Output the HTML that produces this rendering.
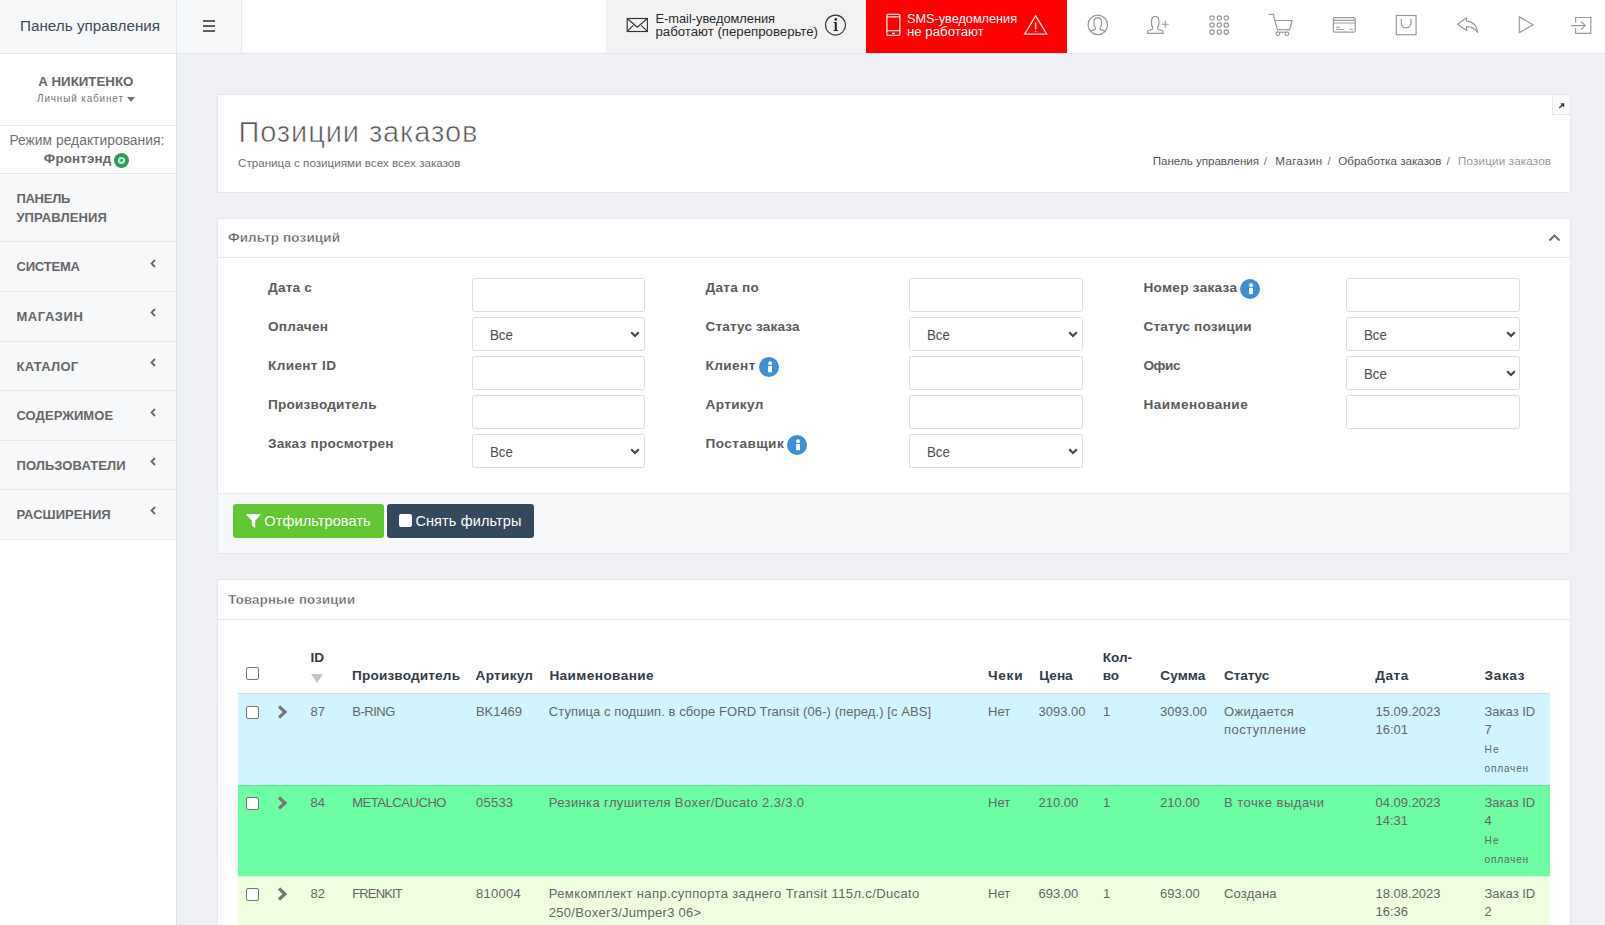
<!DOCTYPE html>
<html><head><meta charset="utf-8">
<style>
*{box-sizing:border-box;margin:0;padding:0}
html,body{width:1605px;height:925px;overflow:hidden;background:#f0f1f5;font-family:"Liberation Sans",sans-serif;color:#555}
.a{position:absolute}
.t{position:absolute;white-space:nowrap;line-height:1}
</style></head><body>
<div class="a" style="left:0.00px;top:0.00px;width:1605.00px;height:53.00px;background:#fff;"></div>
<div class="a" style="left:0.00px;top:53.00px;width:1605.00px;height:1.00px;background:#e1e4e9;"></div>
<div class="a" style="left:0.00px;top:0.00px;width:176.00px;height:53.00px;background:#f7f8fa;"></div>
<div class="a" style="left:176.00px;top:0.00px;width:1.00px;height:54.00px;background:#e1e4e8;"></div>
<div class="a" style="left:177.00px;top:0.00px;width:64.00px;height:53.00px;background:#f7f8fa;"></div>
<div class="a" style="left:241.00px;top:0.00px;width:1.00px;height:53.00px;background:#e6e8ec;"></div>
<span class="t" style="left:20.00px;top:18.19px;font-size:15.25px;color:#3e4a56;">Панель управления</span>
<div class="a" style="left:202.80px;top:20.00px;width:12.60px;height:2.00px;background:#606060;"></div>
<div class="a" style="left:202.80px;top:25.00px;width:12.60px;height:2.00px;background:#606060;"></div>
<div class="a" style="left:202.80px;top:30.00px;width:12.60px;height:2.00px;background:#606060;"></div>
<div class="a" style="left:606.00px;top:0.00px;width:260.00px;height:53.00px;background:#f2f2f2;"></div>
<div class="a" style="left:866.00px;top:0.00px;width:201.00px;height:53.00px;background:#ff0000;"></div>
<span class="t" style="left:655.50px;top:13.46px;font-size:12.80px;color:#2a2a2a;">E-mail-уведомления</span>
<span class="t" style="left:655.50px;top:25.10px;font-size:13.23px;color:#2a2a2a;">работают (перепроверьте)</span>
<span class="t" style="left:907.00px;top:13.35px;font-size:12.70px;color:#fff;">SMS-уведомления</span>
<span class="t" style="left:907.00px;top:24.98px;font-size:13.25px;color:#fff;">не работают</span>
<svg class="a" style="left:0;top:0" width="1605" height="53" viewBox="0 0 1605 53">
 <g fill="none" stroke="#333" stroke-width="1.15">
  <rect x="627.2" y="18.5" width="20.2" height="13" />
  <path d="M627.5 18.8 L637.3 27.2 L647 18.8 M627.5 31.2 L633.3 25.3 M647 31.2 L641.3 25.3"/>
  <circle cx="835.5" cy="25.1" r="10"/>
 </g>
 <g fill="#222"><circle cx="835.8" cy="19.4" r="1.3"/><path d="M833.6 22 H836.8 V30 H838 V31 H833.5 V30 H834.8 V23 H833.6Z"/></g>
 <g fill="none" stroke="#ffe0e0" stroke-width="1.3">
  <rect x="886.9" y="14.4" width="13" height="21" rx="1"/>
  <path d="M887 16.9 H900 M887 30.6 H900 M892 33.4 H895"/>
  <path d="M1035.6 15.8 L1024.6 34.2 H1046.8Z" stroke-linejoin="miter"/>
  <path d="M1035.6 22.5 V29.5" stroke-width="1.4"/>
 </g>
 <circle cx="1035.6" cy="31.5" r="0.8" fill="#ffe0e0"/>
 <g fill="none" stroke="#9a9a9a" stroke-width="1.2">
  <circle cx="1097.8" cy="24.9" r="9.7"/>
  <path d="M1090.2 31.6 C1091 30 1094.3 30.2 1095.3 29.3 V27.6 C1094.2 26.5 1094 24.7 1094 22.5 C1094 19.5 1095.5 17.7 1097.8 17.7 C1100.1 17.7 1101.6 19.5 1101.6 22.5 C1101.6 24.7 1101.4 26.5 1100.3 27.6 V29.3 C1101.3 30.2 1104.6 30 1105.4 31.6"/>
  <path d="M1147.5 33.4 V31.5 C1147.5 30 1152 30 1152.8 29 V27.6 C1151.6 26.4 1151.4 24.6 1151.4 22.2 C1151.4 18.5 1153 16.4 1155.2 16.4 C1157.4 16.4 1159 18.5 1159 22.2 C1159 24.6 1158.8 26.4 1157.6 27.6 V29 C1158.4 30 1163 30 1163 31.5 V33.4 Z"/>
  <path d="M1161.8 24.3 H1168.8 M1165.3 20.8 V27.8" stroke-width="1.1"/>
  <circle cx="1212.1" cy="18" r="2.2"/><circle cx="1219.3" cy="18" r="2.2"/><circle cx="1226.3" cy="18" r="2.2"/>
  <circle cx="1212.1" cy="25" r="2.2"/><circle cx="1219.3" cy="25" r="2.2"/><circle cx="1226.3" cy="25" r="2.2"/>
  <circle cx="1212.1" cy="32.1" r="2.2"/><circle cx="1219.3" cy="32.1" r="2.2"/><circle cx="1226.3" cy="32.1" r="2.2"/>
  <path d="M1268.8 14.3 H1273.3 L1277.4 29.6 H1289.7 L1292.2 20.5 H1275"/>
  <path d="M1279.6 32.2 H1285"/>
  <circle cx="1277.8" cy="33.7" r="1.8"/><circle cx="1286.9" cy="33.7" r="1.8"/>
  <rect x="1333.4" y="17.6" width="21.8" height="14.6" rx="1.5"/>
  <path d="M1333.5 20.3 H1355 M1333.5 23 H1355" />
  <path d="M1336.2 27.3 H1340 M1336.2 29.5 H1343.8 M1349.5 29.3 H1352.8" stroke-width="1"/>
  <rect x="1396.3" y="15.5" width="19.8" height="19.2"/>
  <path d="M1400.5 19.6 H1401.3 V23 C1401.3 26.5 1403.3 27.8 1406.1 27.8 C1408.9 27.8 1410.9 26.5 1410.9 23 V19.6 H1411.7"/>
  <path d="M1457.6 24.3 L1466.5 17.8 V21.1 C1472.5 21.6 1477 25.5 1477.7 32.4 C1475.3 28.6 1472 26.6 1466.5 26.6 V30.6 Z" stroke-linejoin="round"/>
  <path d="M1519.3 16.9 V32.7 L1533 24.8 Z"/>
  <path d="M1575.6 22.5 V17.5 H1590.8 V33.3 H1575.6 V28.3"/>
  <path d="M1570.9 25.6 H1585.2 M1581 21.4 L1585.2 25.6 L1581 29.8"/>
 </g>
</svg>
<div class="a" style="left:0.00px;top:54.00px;width:176.00px;height:871.00px;background:#fff;"></div>
<div class="a" style="left:176.00px;top:54.00px;width:1.00px;height:871.00px;background:#e1e4e8;"></div>
<span class="t" style="left:38.20px;top:74.74px;font-size:13.30px;color:#666;font-weight:bold;letter-spacing:0.001px;">А НИКИТЕНКО</span>
<span class="t" style="left:37.00px;top:93.53px;font-size:10.00px;color:#777;letter-spacing:0.828px;">Личный кабинет</span>
<svg class="a" style="left:127px;top:97px" width="8" height="5" viewBox="0 0 8 5"><path d="M0 0 H8 L4 5Z" fill="#777"/></svg>
<div class="a" style="left:0.00px;top:125.00px;width:176.00px;height:1.00px;background:#e5e7eb;"></div>
<span class="t" style="left:9.40px;top:133.52px;font-size:13.80px;color:#707070;letter-spacing:0.036px;">Режим редактирования:</span>
<span class="t" style="left:43.80px;top:151.86px;font-size:13.40px;color:#666;font-weight:bold;letter-spacing:0.154px;">Фронтэнд</span>
<svg class="a" style="left:114px;top:153px" width="15" height="15" viewBox="0 0 15 15"><circle cx="7.5" cy="7.5" r="7.5" fill="#2a9c5a"/><circle cx="7.5" cy="7.5" r="3.6" fill="#b4f3cc"/><circle cx="7.6" cy="7.4" r="1.4" fill="#5a8a5a"/></svg>
<div class="a" style="left:0.00px;top:173.00px;width:176.00px;height:1.00px;background:#e5e7eb;"></div>
<div class="a" style="left:0.00px;top:174.00px;width:176.00px;height:67.00px;background:#f7f8fa;"></div>
<div class="a" style="left:0.00px;top:241.00px;width:176.00px;height:1.00px;background:#e5e7eb;"></div>
<span class="t" style="left:16.40px;top:191.70px;font-size:13.00px;color:#666;font-weight:bold;letter-spacing:-0.253px;">ПАНЕЛЬ</span>
<span class="t" style="left:16.40px;top:210.80px;font-size:13.00px;color:#666;font-weight:bold;letter-spacing:0.124px;">УПРАВЛЕНИЯ</span>
<div class="a" style="left:0.00px;top:242.00px;width:176.00px;height:49.00px;background:#f7f8fa;"></div>
<div class="a" style="left:0.00px;top:291.00px;width:176.00px;height:1.00px;background:#e5e7eb;"></div>
<span class="t" style="left:16.50px;top:260.20px;font-size:13.00px;color:#666;font-weight:bold;letter-spacing:-0.190px;">СИСТЕМА</span>
<svg class="a" style="left:149.5px;top:258.6px" width="6" height="9" viewBox="0 0 6 9"><path d="M5 1 L1.5 4.5 L5 8" fill="none" stroke="#666" stroke-width="1.8"/></svg>
<div class="a" style="left:0.00px;top:292.00px;width:176.00px;height:49.00px;background:#f7f8fa;"></div>
<div class="a" style="left:0.00px;top:341.00px;width:176.00px;height:1.00px;background:#e5e7eb;"></div>
<span class="t" style="left:16.50px;top:309.90px;font-size:13.00px;color:#666;font-weight:bold;letter-spacing:0.542px;">МАГАЗИН</span>
<svg class="a" style="left:149.5px;top:308.3px" width="6" height="9" viewBox="0 0 6 9"><path d="M5 1 L1.5 4.5 L5 8" fill="none" stroke="#666" stroke-width="1.8"/></svg>
<div class="a" style="left:0.00px;top:342.00px;width:176.00px;height:48.00px;background:#f7f8fa;"></div>
<div class="a" style="left:0.00px;top:390.00px;width:176.00px;height:1.00px;background:#e5e7eb;"></div>
<span class="t" style="left:16.50px;top:359.60px;font-size:13.00px;color:#666;font-weight:bold;letter-spacing:0.291px;">КАТАЛОГ</span>
<svg class="a" style="left:149.5px;top:358.0px" width="6" height="9" viewBox="0 0 6 9"><path d="M5 1 L1.5 4.5 L5 8" fill="none" stroke="#666" stroke-width="1.8"/></svg>
<div class="a" style="left:0.00px;top:391.00px;width:176.00px;height:49.00px;background:#f7f8fa;"></div>
<div class="a" style="left:0.00px;top:440.00px;width:176.00px;height:1.00px;background:#e5e7eb;"></div>
<span class="t" style="left:16.50px;top:409.20px;font-size:13.00px;color:#666;font-weight:bold;letter-spacing:0.049px;">СОДЕРЖИМОЕ</span>
<svg class="a" style="left:149.5px;top:407.6px" width="6" height="9" viewBox="0 0 6 9"><path d="M5 1 L1.5 4.5 L5 8" fill="none" stroke="#666" stroke-width="1.8"/></svg>
<div class="a" style="left:0.00px;top:441.00px;width:176.00px;height:48.00px;background:#f7f8fa;"></div>
<div class="a" style="left:0.00px;top:489.00px;width:176.00px;height:1.00px;background:#e5e7eb;"></div>
<span class="t" style="left:16.50px;top:458.50px;font-size:13.00px;color:#666;font-weight:bold;letter-spacing:0.116px;">ПОЛЬЗОВАТЕЛИ</span>
<svg class="a" style="left:149.5px;top:456.9px" width="6" height="9" viewBox="0 0 6 9"><path d="M5 1 L1.5 4.5 L5 8" fill="none" stroke="#666" stroke-width="1.8"/></svg>
<div class="a" style="left:0.00px;top:490.00px;width:176.00px;height:49.00px;background:#f7f8fa;"></div>
<div class="a" style="left:0.00px;top:539.00px;width:176.00px;height:1.00px;background:#e5e7eb;"></div>
<span class="t" style="left:16.50px;top:507.90px;font-size:13.00px;color:#666;font-weight:bold;letter-spacing:0.043px;">РАСШИРЕНИЯ</span>
<svg class="a" style="left:149.5px;top:506.3px" width="6" height="9" viewBox="0 0 6 9"><path d="M5 1 L1.5 4.5 L5 8" fill="none" stroke="#666" stroke-width="1.8"/></svg>
<div class="a" style="left:217.00px;top:94.00px;width:1354.00px;height:99.00px;background:#e3e6ea;"></div>
<div class="a" style="left:218.00px;top:95.00px;width:1352.00px;height:97.00px;background:#fff;"></div>
<div class="a" style="left:1552.00px;top:95.00px;width:18.00px;height:19.00px;background:#f9fafb;"></div>
<div class="a" style="left:1552.00px;top:95.00px;width:1.00px;height:20.00px;background:#e3e6ea;"></div>
<div class="a" style="left:1552.00px;top:114.00px;width:18.00px;height:1.00px;background:#e3e6ea;"></div>
<svg class="a" style="left:1556px;top:100.5px" width="10" height="10" viewBox="0 0 10 10"><path d="M3.3 7.1 L7.4 3 M4.7 2.8 H7.6 V5.7" fill="none" stroke="#3a3a3a" stroke-width="1.35"/></svg>
<span class="t" style="left:238.40px;top:118.25px;font-size:29.00px;color:#555;letter-spacing:0.910px;-webkit-text-stroke:0.6px #fff;">Позиции заказов</span>
<span class="t" style="left:238.00px;top:157.38px;font-size:11.60px;color:#707070;letter-spacing:0.027px;">Страница с позициями всех всех заказов</span>
<span class="t" style="left:1152.70px;top:155.18px;font-size:11.60px;color:#555;letter-spacing:-0.007px;">Панель управления</span>
<span class="t" style="left:1263.80px;top:155.18px;font-size:11.60px;color:#777;">/</span>
<span class="t" style="left:1275.30px;top:155.18px;font-size:11.60px;color:#555;letter-spacing:0.361px;">Магазин</span>
<span class="t" style="left:1327.60px;top:155.18px;font-size:11.60px;color:#777;">/</span>
<span class="t" style="left:1338.20px;top:155.18px;font-size:11.60px;color:#555;letter-spacing:0.025px;">Обработка заказов</span>
<span class="t" style="left:1446.60px;top:155.18px;font-size:11.60px;color:#777;">/</span>
<span class="t" style="left:1458.00px;top:155.18px;font-size:11.60px;color:#999;letter-spacing:0.181px;">Позиции заказов</span>
<div class="a" style="left:217.00px;top:218.00px;width:1354.00px;height:336.00px;background:#e3e6ea;"></div>
<div class="a" style="left:218.00px;top:219.00px;width:1352.00px;height:334.00px;background:#fff;"></div>
<div class="a" style="left:218.00px;top:257.00px;width:1352.00px;height:1.00px;background:#e6e8ec;"></div>
<span class="t" style="left:228.00px;top:231.47px;font-size:13.50px;color:#5a5a5a;font-weight:bold;letter-spacing:0.135px;-webkit-text-stroke:0.35px #fff;">Фильтр позиций</span>
<svg class="a" style="left:1548px;top:233px" width="13" height="9" viewBox="0 0 13 9"><path d="M1.5 7.5 L6.5 2.5 L11.5 7.5" fill="none" stroke="#666" stroke-width="1.8"/></svg>
<div class="a" style="left:218.00px;top:493.00px;width:1352.00px;height:1.00px;background:#e6e8ec;"></div>
<div class="a" style="left:218.00px;top:494.00px;width:1352.00px;height:59.00px;background:#f7f8fa;"></div>
<span class="t" style="left:268.00px;top:281.09px;font-size:13.60px;color:#5c5c5c;font-weight:bold;letter-spacing:0.197px;">Дата с</span>
<div class="a" style="left:472px;top:278px;width:173px;height:34px;background:#fff;border:1px solid #dcdcdc;border-radius:2.5px"></div>
<span class="t" style="left:268.00px;top:320.09px;font-size:13.60px;color:#5c5c5c;font-weight:bold;letter-spacing:0.281px;">Оплачен</span>
<div class="a" style="left:472px;top:317px;width:173px;height:34px;background:#fff;border:1px solid #dcdcdc;border-radius:2.5px"></div>
<span class="t" style="left:489.80px;top:327.73px;font-size:14.50px;color:#505050;transform:scaleX(0.915);transform-origin:0 0;">Все</span>
<svg class="a" style="left:630.0px;top:331px" width="10" height="7" viewBox="0 0 10 7"><path d="M1.2 1.2 L5 5 L8.8 1.2" fill="none" stroke="#444" stroke-width="2"/></svg>
<span class="t" style="left:268.00px;top:359.09px;font-size:13.60px;color:#5c5c5c;font-weight:bold;letter-spacing:0.363px;">Клиент ID</span>
<div class="a" style="left:472px;top:356px;width:173px;height:34px;background:#fff;border:1px solid #dcdcdc;border-radius:2.5px"></div>
<span class="t" style="left:268.00px;top:398.09px;font-size:13.60px;color:#5c5c5c;font-weight:bold;letter-spacing:0.208px;">Производитель</span>
<div class="a" style="left:472px;top:395px;width:173px;height:34px;background:#fff;border:1px solid #dcdcdc;border-radius:2.5px"></div>
<span class="t" style="left:268.00px;top:437.09px;font-size:13.60px;color:#5c5c5c;font-weight:bold;letter-spacing:0.239px;">Заказ просмотрен</span>
<div class="a" style="left:472px;top:434px;width:173px;height:34px;background:#fff;border:1px solid #dcdcdc;border-radius:2.5px"></div>
<span class="t" style="left:489.80px;top:444.73px;font-size:14.50px;color:#505050;transform:scaleX(0.915);transform-origin:0 0;">Все</span>
<svg class="a" style="left:630.0px;top:448px" width="10" height="7" viewBox="0 0 10 7"><path d="M1.2 1.2 L5 5 L8.8 1.2" fill="none" stroke="#444" stroke-width="2"/></svg>
<span class="t" style="left:705.50px;top:281.09px;font-size:13.60px;color:#5c5c5c;font-weight:bold;letter-spacing:0.272px;">Дата по</span>
<div class="a" style="left:909px;top:278px;width:174px;height:34px;background:#fff;border:1px solid #dcdcdc;border-radius:2.5px"></div>
<span class="t" style="left:705.50px;top:320.09px;font-size:13.60px;color:#5c5c5c;font-weight:bold;letter-spacing:0.141px;">Статус заказа</span>
<div class="a" style="left:909px;top:317px;width:174px;height:34px;background:#fff;border:1px solid #dcdcdc;border-radius:2.5px"></div>
<span class="t" style="left:926.80px;top:327.73px;font-size:14.50px;color:#505050;transform:scaleX(0.915);transform-origin:0 0;">Все</span>
<svg class="a" style="left:1068.3px;top:331px" width="10" height="7" viewBox="0 0 10 7"><path d="M1.2 1.2 L5 5 L8.8 1.2" fill="none" stroke="#444" stroke-width="2"/></svg>
<span class="t" style="left:705.50px;top:359.09px;font-size:13.60px;color:#5c5c5c;font-weight:bold;letter-spacing:0.416px;">Клиент</span>
<div class="a" style="left:909px;top:356px;width:174px;height:34px;background:#fff;border:1px solid #dcdcdc;border-radius:2.5px"></div>
<svg class="a" style="left:758.8px;top:356.8px" width="20" height="20" viewBox="0 0 20 20"><circle cx="10" cy="10" r="10" fill="#3d8fd8"/><circle cx="11.1" cy="6.2" r="1.9" fill="#fff"/><path d="M9.1 8.9 H13 V15.2 H9.1Z" fill="#fff"/></svg>
<span class="t" style="left:705.50px;top:398.09px;font-size:13.60px;color:#5c5c5c;font-weight:bold;letter-spacing:0.353px;">Артикул</span>
<div class="a" style="left:909px;top:395px;width:174px;height:34px;background:#fff;border:1px solid #dcdcdc;border-radius:2.5px"></div>
<span class="t" style="left:705.50px;top:437.09px;font-size:13.60px;color:#5c5c5c;font-weight:bold;letter-spacing:0.441px;">Поставщик</span>
<div class="a" style="left:909px;top:434px;width:174px;height:34px;background:#fff;border:1px solid #dcdcdc;border-radius:2.5px"></div>
<span class="t" style="left:926.80px;top:444.73px;font-size:14.50px;color:#505050;transform:scaleX(0.915);transform-origin:0 0;">Все</span>
<svg class="a" style="left:1068.3px;top:448px" width="10" height="7" viewBox="0 0 10 7"><path d="M1.2 1.2 L5 5 L8.8 1.2" fill="none" stroke="#444" stroke-width="2"/></svg>
<svg class="a" style="left:786.6px;top:434.8px" width="20" height="20" viewBox="0 0 20 20"><circle cx="10" cy="10" r="10" fill="#3d8fd8"/><circle cx="11.1" cy="6.2" r="1.9" fill="#fff"/><path d="M9.1 8.9 H13 V15.2 H9.1Z" fill="#fff"/></svg>
<span class="t" style="left:1143.50px;top:281.09px;font-size:13.60px;color:#5c5c5c;font-weight:bold;letter-spacing:0.277px;">Номер заказа</span>
<div class="a" style="left:1346px;top:278px;width:174px;height:34px;background:#fff;border:1px solid #dcdcdc;border-radius:2.5px"></div>
<svg class="a" style="left:1240.0px;top:279.0px" width="20" height="20" viewBox="0 0 20 20"><circle cx="10" cy="10" r="10" fill="#3d8fd8"/><circle cx="11.1" cy="6.2" r="1.9" fill="#fff"/><path d="M9.1 8.9 H13 V15.2 H9.1Z" fill="#fff"/></svg>
<span class="t" style="left:1143.50px;top:320.09px;font-size:13.60px;color:#5c5c5c;font-weight:bold;letter-spacing:0.145px;">Статус позиции</span>
<div class="a" style="left:1346px;top:317px;width:174px;height:34px;background:#fff;border:1px solid #dcdcdc;border-radius:2.5px"></div>
<span class="t" style="left:1363.80px;top:327.73px;font-size:14.50px;color:#505050;transform:scaleX(0.915);transform-origin:0 0;">Все</span>
<svg class="a" style="left:1505.5px;top:331px" width="10" height="7" viewBox="0 0 10 7"><path d="M1.2 1.2 L5 5 L8.8 1.2" fill="none" stroke="#444" stroke-width="2"/></svg>
<span class="t" style="left:1143.50px;top:359.09px;font-size:13.60px;color:#5c5c5c;font-weight:bold;letter-spacing:-0.464px;">Офис</span>
<div class="a" style="left:1346px;top:356px;width:174px;height:34px;background:#fff;border:1px solid #dcdcdc;border-radius:2.5px"></div>
<span class="t" style="left:1363.80px;top:366.73px;font-size:14.50px;color:#505050;transform:scaleX(0.915);transform-origin:0 0;">Все</span>
<svg class="a" style="left:1505.5px;top:370px" width="10" height="7" viewBox="0 0 10 7"><path d="M1.2 1.2 L5 5 L8.8 1.2" fill="none" stroke="#444" stroke-width="2"/></svg>
<span class="t" style="left:1143.50px;top:398.09px;font-size:13.60px;color:#5c5c5c;font-weight:bold;letter-spacing:0.406px;">Наименование</span>
<div class="a" style="left:1346px;top:395px;width:174px;height:34px;background:#fff;border:1px solid #dcdcdc;border-radius:2.5px"></div>
<div class="a" style="left:233.00px;top:504.00px;width:151.00px;height:34.00px;background:#60c733;border-radius:3px"></div>
<svg class="a" style="left:245.8px;top:514px" width="15" height="15" viewBox="0 0 15 15"><path d="M0.3 0.8 Q0.3 0 1 0 H14 Q14.7 0 14.7 0.8 L9.2 6.8 V14 L5.8 11.8 V6.8Z" fill="#fff"/></svg>
<span class="t" style="left:264.30px;top:513.53px;font-size:14.50px;color:#fff;letter-spacing:0.101px;">Отфильтровать</span>
<div class="a" style="left:387.00px;top:504.00px;width:147.00px;height:34.00px;background:#34495e;border-radius:3px"></div>
<div class="a" style="left:399.20px;top:514.20px;width:12.80px;height:12.80px;background:#fff;border-radius:2px"></div>
<span class="t" style="left:415.40px;top:513.53px;font-size:14.50px;color:#fff;letter-spacing:0.116px;">Снять фильтры</span>
<div class="a" style="left:217.00px;top:579.00px;width:1354.00px;height:362.00px;background:#e3e6ea;"></div>
<div class="a" style="left:218.00px;top:580.00px;width:1352.00px;height:360.00px;background:#fff;"></div>
<div class="a" style="left:218.00px;top:619.00px;width:1352.00px;height:1.00px;background:#e6e8ec;"></div>
<span class="t" style="left:228.30px;top:592.93px;font-size:13.20px;color:#5a5a5a;font-weight:bold;letter-spacing:0.202px;-webkit-text-stroke:0.35px #fff;">Товарные позиции</span>
<div class="a" style="left:246.0px;top:667.0px;width:13px;height:13px;border:1px solid #767676;border-radius:2px;background:#fff"></div>
<span class="t" style="left:310.60px;top:650.89px;font-size:13.60px;color:#333c48;font-weight:bold;">ID</span>
<svg class="a" style="left:311px;top:674px" width="12" height="10" viewBox="0 0 12 10"><path d="M0 0 H12 L6 9Z" fill="#c4c4c4"/></svg>
<span class="t" style="left:352.00px;top:668.69px;font-size:13.60px;color:#333c48;font-weight:bold;letter-spacing:0.167px;">Производитель</span>
<span class="t" style="left:475.60px;top:668.69px;font-size:13.60px;color:#333c48;font-weight:bold;letter-spacing:0.270px;">Артикул</span>
<span class="t" style="left:549.40px;top:668.69px;font-size:13.60px;color:#333c48;font-weight:bold;letter-spacing:0.406px;">Наименование</span>
<span class="t" style="left:988.00px;top:668.69px;font-size:13.60px;color:#333c48;font-weight:bold;letter-spacing:0.740px;">Чеки</span>
<span class="t" style="left:1039.20px;top:668.69px;font-size:13.60px;color:#333c48;font-weight:bold;letter-spacing:0.021px;">Цена</span>
<span class="t" style="left:1160.20px;top:668.69px;font-size:13.60px;color:#333c48;font-weight:bold;letter-spacing:0.124px;">Сумма</span>
<span class="t" style="left:1224.00px;top:668.69px;font-size:13.60px;color:#333c48;font-weight:bold;letter-spacing:-0.106px;">Статус</span>
<span class="t" style="left:1375.20px;top:668.69px;font-size:13.60px;color:#333c48;font-weight:bold;letter-spacing:0.544px;">Дата</span>
<span class="t" style="left:1484.50px;top:668.69px;font-size:13.60px;color:#333c48;font-weight:bold;letter-spacing:0.656px;">Заказ</span>
<span class="t" style="left:1102.70px;top:650.99px;font-size:13.60px;color:#333c48;font-weight:bold;">Кол-</span>
<span class="t" style="left:1102.70px;top:668.69px;font-size:13.60px;color:#333c48;font-weight:bold;">во</span>
<div class="a" style="left:238.00px;top:693.00px;width:1312.00px;height:1.00px;background:#d5dde3;"></div>
<div class="a" style="left:238.00px;top:694.00px;width:1312.00px;height:91.00px;background:#d0f5fe;"></div>
<div class="a" style="left:246.0px;top:706.0px;width:13px;height:13px;border:1px solid #767676;border-radius:2px;background:#fff"></div>
<svg class="a" style="left:277px;top:705px" width="11" height="14" viewBox="0 0 11 14"><path d="M2 1.5 L8 7 L2 12.5" fill="none" stroke="#777" stroke-width="3.2"/></svg>
<span class="t" style="left:310.50px;top:705.10px;font-size:13.00px;color:#666;">87</span>
<span class="t" style="left:352.20px;top:705.10px;font-size:13.00px;color:#666;letter-spacing:-0.460px;">B-RING</span>
<span class="t" style="left:476.00px;top:705.10px;font-size:13.00px;color:#666;letter-spacing:-0.053px;">BK1469</span>
<span class="t" style="left:548.80px;top:705.10px;font-size:13.00px;color:#666;letter-spacing:0.084px;">Ступица с подшип. в сборе FORD Transit (06-) (перед.) [с ABS]</span>
<span class="t" style="left:988.00px;top:705.10px;font-size:13.00px;color:#666;">Нет</span>
<span class="t" style="left:1038.50px;top:705.10px;font-size:13.00px;color:#666;">3093.00</span>
<span class="t" style="left:1103.00px;top:705.10px;font-size:13.00px;color:#666;">1</span>
<span class="t" style="left:1160.00px;top:705.10px;font-size:13.00px;color:#666;">3093.00</span>
<span class="t" style="left:1224.00px;top:705.10px;font-size:13.00px;color:#666;letter-spacing:0.346px;">Ожидается</span>
<span class="t" style="left:1224.00px;top:723.20px;font-size:13.00px;color:#666;letter-spacing:0.499px;">поступление</span>
<span class="t" style="left:1375.50px;top:705.10px;font-size:13.00px;color:#666;">15.09.2023</span>
<span class="t" style="left:1375.50px;top:723.20px;font-size:13.00px;color:#666;">16:01</span>
<span class="t" style="left:1484.50px;top:705.10px;font-size:13.00px;color:#666;">Заказ ID</span>
<span class="t" style="left:1484.50px;top:722.70px;font-size:13.00px;color:#666;">7</span>
<span class="t" style="left:1484.60px;top:744.87px;font-size:10.20px;color:#666;letter-spacing:0.969px;">Не</span>
<span class="t" style="left:1484.60px;top:763.57px;font-size:10.20px;color:#666;letter-spacing:0.738px;">оплачен</span>
<div class="a" style="left:238.00px;top:785.00px;width:1312.00px;height:91.00px;background:#6dfda2;"></div>
<div class="a" style="left:238.00px;top:785.00px;width:1312.00px;height:1.00px;background:#64ec98;"></div>
<div class="a" style="left:246.0px;top:797.0px;width:13px;height:13px;border:1px solid #767676;border-radius:2px;background:#fff"></div>
<svg class="a" style="left:277px;top:796px" width="11" height="14" viewBox="0 0 11 14"><path d="M2 1.5 L8 7 L2 12.5" fill="none" stroke="#777" stroke-width="3.2"/></svg>
<span class="t" style="left:310.50px;top:796.10px;font-size:13.00px;color:#666;">84</span>
<span class="t" style="left:352.20px;top:796.10px;font-size:13.00px;color:#666;letter-spacing:-0.442px;">METALCAUCHO</span>
<span class="t" style="left:476.00px;top:796.10px;font-size:13.00px;color:#666;letter-spacing:0.236px;">05533</span>
<span class="t" style="left:548.80px;top:796.10px;font-size:13.00px;color:#666;letter-spacing:0.374px;">Резинка глушителя Boxer/Ducato 2.3/3.0</span>
<span class="t" style="left:988.00px;top:796.10px;font-size:13.00px;color:#666;">Нет</span>
<span class="t" style="left:1038.50px;top:796.10px;font-size:13.00px;color:#666;">210.00</span>
<span class="t" style="left:1103.00px;top:796.10px;font-size:13.00px;color:#666;">1</span>
<span class="t" style="left:1160.00px;top:796.10px;font-size:13.00px;color:#666;">210.00</span>
<span class="t" style="left:1224.00px;top:796.10px;font-size:13.00px;color:#666;letter-spacing:0.507px;">В точке выдачи</span>
<span class="t" style="left:1375.50px;top:796.10px;font-size:13.00px;color:#666;">04.09.2023</span>
<span class="t" style="left:1375.50px;top:814.20px;font-size:13.00px;color:#666;">14:31</span>
<span class="t" style="left:1484.50px;top:796.10px;font-size:13.00px;color:#666;">Заказ ID</span>
<span class="t" style="left:1484.50px;top:813.70px;font-size:13.00px;color:#666;">4</span>
<span class="t" style="left:1484.60px;top:835.87px;font-size:10.20px;color:#666;letter-spacing:0.969px;">Не</span>
<span class="t" style="left:1484.60px;top:854.57px;font-size:10.20px;color:#666;letter-spacing:0.738px;">оплачен</span>
<div class="a" style="left:238.00px;top:876.00px;width:1312.00px;height:60.00px;background:#f0fee0;"></div>
<div class="a" style="left:238.00px;top:876.00px;width:1312.00px;height:1.00px;background:#e2eed6;"></div>
<div class="a" style="left:246.0px;top:888.0px;width:13px;height:13px;border:1px solid #767676;border-radius:2px;background:#fff"></div>
<svg class="a" style="left:277px;top:887px" width="11" height="14" viewBox="0 0 11 14"><path d="M2 1.5 L8 7 L2 12.5" fill="none" stroke="#777" stroke-width="3.2"/></svg>
<span class="t" style="left:310.50px;top:887.10px;font-size:13.00px;color:#666;">82</span>
<span class="t" style="left:352.20px;top:887.10px;font-size:13.00px;color:#666;letter-spacing:-0.854px;">FRENKIT</span>
<span class="t" style="left:476.00px;top:887.10px;font-size:13.00px;color:#666;letter-spacing:0.262px;">810004</span>
<span class="t" style="left:548.80px;top:887.10px;font-size:13.00px;color:#666;letter-spacing:0.374px;">Ремкомплект напр.суппорта заднего Transit 115л.с/Ducato</span>
<span class="t" style="left:548.80px;top:906.00px;font-size:13.00px;color:#666;letter-spacing:0.288px;">250/Boxer3/Jumper3 06&gt;</span>
<span class="t" style="left:988.00px;top:887.10px;font-size:13.00px;color:#666;">Нет</span>
<span class="t" style="left:1038.50px;top:887.10px;font-size:13.00px;color:#666;">693.00</span>
<span class="t" style="left:1103.00px;top:887.10px;font-size:13.00px;color:#666;">1</span>
<span class="t" style="left:1160.00px;top:887.10px;font-size:13.00px;color:#666;">693.00</span>
<span class="t" style="left:1224.00px;top:887.10px;font-size:13.00px;color:#666;letter-spacing:0.188px;">Создана</span>
<span class="t" style="left:1375.50px;top:887.10px;font-size:13.00px;color:#666;">18.08.2023</span>
<span class="t" style="left:1375.50px;top:905.20px;font-size:13.00px;color:#666;">16:36</span>
<span class="t" style="left:1484.50px;top:887.10px;font-size:13.00px;color:#666;">Заказ ID</span>
<span class="t" style="left:1484.50px;top:904.70px;font-size:13.00px;color:#666;">2</span>
</body></html>
